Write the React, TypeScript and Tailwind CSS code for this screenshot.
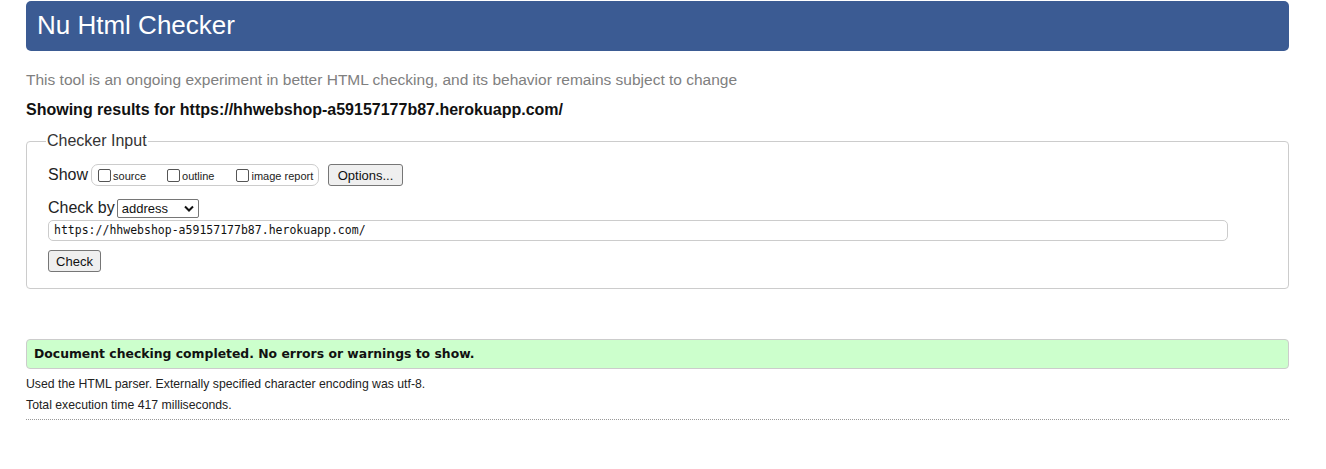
import React from "react";

export default function App() {
  return (
    <div className="w-[1326px] h-[469px] bg-white overflow-hidden font-['Liberation_Sans',Arial,sans-serif] text-[#222]">
      <div className="ml-[26px] w-[1263px] pt-px">
        <div className="h-[50px] bg-[#3b5b93] rounded-[5px] flex items-center pl-[11px]">
          <h1 className="text-white text-[26px] leading-none mt-[-3px]">Nu Html Checker</h1>
        </div>
        <p className="mt-[19px] text-[15.5px] leading-[20px] text-[#808080]">
          This tool is an ongoing experiment in better HTML checking, and its behavior remains subject to change
        </p>
        <p className="mt-[10px] text-[16px] leading-[20px] font-bold text-[#111]">
          Showing results for https://hhwebshop-a59157177b87.herokuapp.com/
        </p>
        <fieldset className="mt-[12px] border border-[#cccccc] rounded-[4px] h-[157px] pl-[21px] pr-[12px] relative">
          <legend className="ml-[-2px] px-[1px] text-[16px] leading-[18px] text-[#333]">Checker Input</legend>
          <div className="flex items-center mt-[14px] h-[22px]">
            <span className="text-[16px] text-[#222]">Show</span>
            <div className="ml-[3px] h-[22px] w-[228px] border border-[#cccccc] rounded-[7px] flex items-center pl-[6px] text-[11px] text-[#222]">
              <label className="flex items-center">
                <span className="inline-block w-[13px] h-[13px] border border-[#555] rounded-[2px] bg-white mr-[2px]" />
                <span className="mt-[3px]">source</span>
              </label>
              <label className="flex items-center ml-[21px]">
                <span className="inline-block w-[13px] h-[13px] border border-[#555] rounded-[2px] bg-white mr-[2px]" />
                <span className="mt-[3px]">outline</span>
              </label>
              <label className="flex items-center ml-[22px]">
                <span className="inline-block w-[13px] h-[13px] border border-[#555] rounded-[2px] bg-white mr-[2px]" />
                <span className="mt-[3px]">image report</span>
              </label>
            </div>
            <button className="ml-[9px] h-[22px] w-[75px] border border-[#767676] rounded-[3px] bg-[#efefef] text-[13px] text-[#111] flex items-center justify-center pt-px">
              Options...
            </button>
          </div>
          <div className="flex items-center mt-[12px] h-[20px]">
            <span className="text-[16px] text-[#222]">Check by</span>
            <div className="ml-[2px] h-[19px] w-[82px] border border-[#767676] rounded-[2px] bg-white flex items-center justify-between pl-[4px] pr-[4px] text-[13px] text-[#111]">
              <span className="mt-[1px]">address</span>
              <svg width="10" height="7" viewBox="0 0 10 7"><path d="M1 1.5 L5 5.5 L9 1.5" stroke="#111" strokeWidth="2" fill="none" /></svg>
            </div>
          </div>
          <div className="mt-[2px] w-[1180px] h-[21px] border border-[#cccccc] rounded-[5px] flex items-center pl-[5px] text-[11.5px] font-['DejaVu_Sans_Mono',monospace] text-[#111]">
            https://hhwebshop-a59157177b87.herokuapp.com/
          </div>
          <button className="mt-[9px] h-[22px] w-[53px] border border-[#767676] rounded-[3px] bg-[#efefef] text-[13px] text-[#111] flex items-center justify-center pt-px">
            Check
          </button>
        </fieldset>
        <div className="mt-[50px] h-[30px] bg-[#ccffcc] border border-[#cccccc] rounded-[4px] flex items-center pl-[7px]">
          <span className="font-['DejaVu_Sans',Verdana,sans-serif] font-bold text-[12.4px] text-[#111]">
            Document checking completed. No errors or warnings to show.
          </span>
        </div>
        <p className="mt-[7px] text-[12.25px] leading-[16px] text-[#222]">
          Used the HTML parser. Externally specified character encoding was utf-8.
        </p>
        <p className="mt-[5px] text-[12.25px] leading-[16px] text-[#222]">Total execution time 417 milliseconds.</p>
        <div className="mt-[6px] border-t border-dotted border-[#999]" />
      </div>
    </div>
  );
}
